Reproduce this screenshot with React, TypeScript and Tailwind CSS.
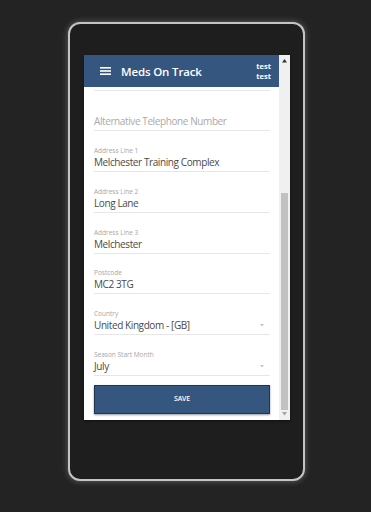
const fields: { label: string; value: string; select?: boolean }[] = [
  { label: 'Address Line 1', value: 'Melchester Training Complex' },
  { label: 'Address Line 2', value: 'Long Lane' },
  { label: 'Address Line 3', value: 'Melchester' },
  { label: 'Postcode', value: 'MC2 3TG' },
  { label: 'Country', value: 'United Kingdom - [GB]', select: true },
  { label: 'Season Start Month', value: 'July', select: true },
]

function Caret() {
  return (
    <svg width="4" height="3" viewBox="0 0 4 3" className="mb-[5px] mr-[6px]">
      <path d="M0 0h4L2 2.5z" fill="#c4c4c4" />
    </svg>
  )
}

function Hamburger() {
  return (
    <svg width="11" height="8" viewBox="0 0 11 8" fill="white">
      <rect x="0" y="0" width="11" height="1.6" />
      <rect x="0" y="3.2" width="11" height="1.6" />
      <rect x="0" y="6.4" width="11" height="1.6" />
    </svg>
  )
}

export default function App() {
  return (
    <div
      className="h-[512px] w-[371px] bg-[#232323] pl-[68px] pt-[22px]"
      style={{ fontFamily: '"Open Sans", "Noto Sans", sans-serif' }}
    >
      <div className="h-[459px] w-[237px] rounded-[12px] border-2 border-[#c4c4c4] bg-[#1e1e1e] pl-[14px] pt-[31px] shadow-[0_0_6px_rgba(255,255,255,0.3)]">
        <div className="flex h-[365px] w-[206px] bg-white shadow-[0_1px_2px_rgba(0,0,0,0.5)]">
          {/* Content */}
          <div className="flex w-[195px] flex-col">
            <header className="flex h-[32px] items-center bg-[#35567f] pl-[16px] pr-[8px] text-white">
              <Hamburger />
              <span className="ml-[10px] mt-[1px] text-[11.5px] font-semibold leading-none tracking-[-0.15px]">
                Meds On Track
              </span>
              <div className="ml-auto flex flex-col items-end text-[7.5px] font-bold leading-[10px]">
                <span>test</span>
                <span>test</span>
              </div>
            </header>

            <div className="flex flex-col pl-[10px] pr-[9px]">
              <div className="h-[3.5px] border-b border-[#e6e6e6]" />

              <div className="flex h-[40.8px] flex-col justify-end border-b border-[#e6e6e6] pb-[2px]">
                <span className="text-[10px] leading-[14px] tracking-[-0.4px] text-[#aaaaaa]">
                  Alternative Telephone Number
                </span>
              </div>

              {fields.map((f) => (
                <div
                  key={f.label}
                  className="flex h-[40.8px] flex-col justify-end border-b border-[#e6e6e6] pb-[2px]"
                >
                  <span className="text-[6.5px] leading-[9px] text-[#a6a6a6]">{f.label}</span>
                  <div className="flex items-end justify-between">
                    <span className="text-[10px] leading-[14px] tracking-[-0.4px] text-[#4a4a4a]">{f.value}</span>
                    {f.select && <Caret />}
                  </div>
                </div>
              ))}

              <button className="mt-[9px] h-[29px] w-full border border-[#1d3658] bg-[#35567f] text-[7px] font-semibold tracking-[-0.2px] text-white shadow-[0_1px_2px_rgba(0,0,0,0.4)]">
                SAVE
              </button>
            </div>
          </div>

          {/* Scrollbar */}
          <div className="flex w-[11px] flex-col items-center bg-[#f0f0f0] py-[4px]">
            <svg width="5" height="4" viewBox="0 0 5 4">
              <path d="M0 3.5h5L2.5 0z" fill="#333" />
            </svg>
            <div className="mt-[130px] w-[7px] flex-1 bg-[#c1c1c1]" />
            <svg width="5" height="4" viewBox="0 0 5 4" className="mt-[2px]">
              <path d="M0 0h5L2.5 3.5z" fill="#a3a3a3" />
            </svg>
          </div>
        </div>
      </div>
    </div>
  )
}
